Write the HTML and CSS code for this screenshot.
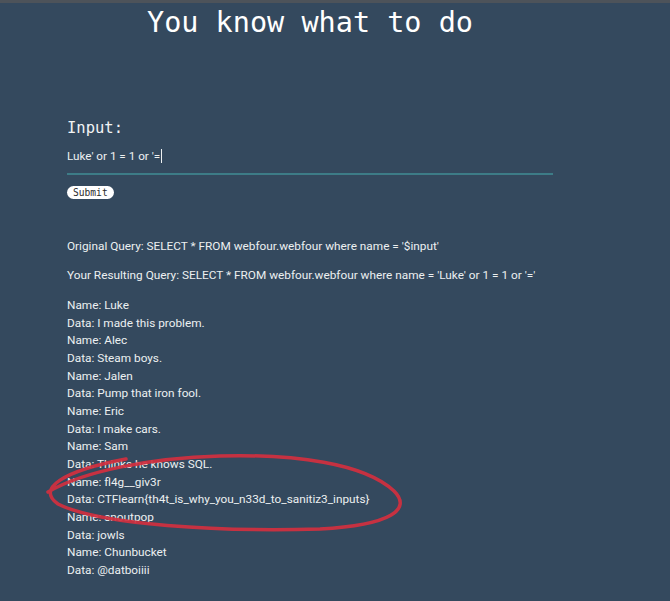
FILE: index.html
```html
<!DOCTYPE html>
<html>
<head>
<meta charset="utf-8">
<link rel="stylesheet" href="styles.css">
</head>
<body>
<div class="page">
  <h1 class="title">You know what to do</h1>
  <form class="form">
    <div class="label">Input:</div>
    <div class="field">Luke' or 1 = 1 or '=<span class="caret"></span></div>
    <button class="submit" type="button">Submit</button>
  </form>
  <div class="output">
    <p class="query">Original Query: SELECT * FROM webfour.webfour where name = '$input'</p>
    <p class="query">Your Resulting Query: SELECT * FROM webfour.webfour where name = 'Luke' or 1 = 1 or '='</p>
    <div class="results">
      <div>Name: Luke</div>
      <div>Data: I made this problem.</div>
      <div>Name: Alec</div>
      <div>Data: Steam boys.</div>
      <div>Name: Jalen</div>
      <div>Data: Pump that iron fool.</div>
      <div>Name: Eric</div>
      <div>Data: I make cars.</div>
      <div>Name: Sam</div>
      <div>Data: Thinks he knows SQL.</div>
      <div>Name: fl4g__giv3r</div>
      <div>Data: CTFlearn{th4t_is_why_you_n33d_to_sanitiz3_inputs}</div>
      <div>Name: snoutpop</div>
      <div>Data: jowls</div>
      <div>Name: Chunbucket</div>
      <div>Data: @datboiiii</div>
    </div>
  </div>
</div>
<svg class="annotation" width="670" height="601" viewBox="0 0 670 601">
  <path class="mark" d="M126 459 C 62 471, 36 489, 58 504 C 100 525, 220 532, 320 529 C 392 525, 412 509, 394 491 C 364 463, 294 454, 220 456 C 150 458, 84 471, 48 492"/>
</svg>
</body>
</html>
```
FILE: styles.css
```css
html, body {
  margin: 0;
  padding: 0;
}
body {
  background: #34495e;
  border-top: 3px solid #4d535a;
  min-height: 598px;
  position: relative;
  font-family: Roboto, "Liberation Sans", sans-serif;
  color: #ecf0f1;
}
.page {
  width: 486px;
  margin-left: 67px;
}
.title {
  margin: 0;
  padding-top: 3px;
  font-family: "DejaVu Sans Mono", monospace;
  font-weight: normal;
  font-size: 28.5px;
  line-height: 34px;
  color: #ffffff;
  text-align: center;
}
.form {
  margin-top: 78px;
}
.label {
  font-family: "DejaVu Sans Mono", monospace;
  font-size: 15.5px;
  line-height: 20px;
  color: #f2f4f5;
}
.field {
  font-size: 11.7px;
  line-height: 16px;
  padding: 10px 0 9px;
  border-bottom: 2px solid #3d7c87;
  color: #eef1f2;
}
.caret {
  display: inline-block;
  width: 1px;
  height: 14px;
  background: #eef1f2;
  vertical-align: -3px;
  margin-left: 1px;
}
.submit {
  display: block;
  margin-top: 11px;
  padding: 0 6px;
  height: 13px;
  border: none;
  border-radius: 7px;
  background: #ffffff;
  color: #2b2b2b;
  font-family: "DejaVu Sans Mono", monospace;
  font-size: 9.6px;
  line-height: 13px;
}
.output {
  margin-top: 40px;
  font-size: 11.8px;
  white-space: nowrap;
}
.query {
  margin: 0 0 14px;
  line-height: 15px;
}
.results {
  margin-top: 14px;
  line-height: 17.67px;
}
.annotation {
  position: absolute;
  left: 0;
  top: -3px;
  pointer-events: none;
}
.mark {
  fill: none;
  stroke: #d2303f;
  stroke-width: 3.5;
  stroke-linecap: round;
  opacity: 0.92;
}
```
